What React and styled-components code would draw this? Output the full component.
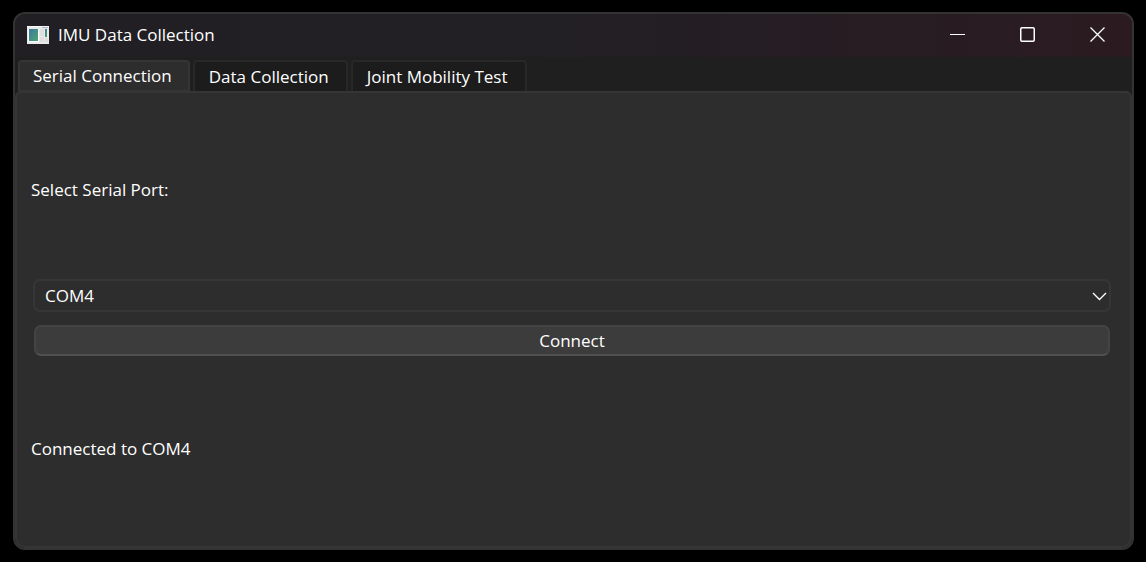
import React, { useState } from "react";
import styled, { createGlobalStyle } from "styled-components";

const GlobalStyle = createGlobalStyle`
  *, *::before, *::after { box-sizing: border-box; }
  body { margin: 0; background: #000; }
  body, button, select {
    font-family: "Segoe UI", "Open Sans", "Noto Sans", sans-serif;
    font-size: 17px;
    line-height: 24px;
    color: #fff;
  }
`;

const Desktop = styled.div`
  display: flex;
  min-height: 100vh;
  padding: 12px 12px 12px 13px;
`;

const Window = styled.main`
  flex: 1;
  display: flex;
  flex-direction: column;
  overflow: hidden;
  border: 2px solid #333;
  border-radius: 12px;
  background: #1f1f1f;
`;

const TitleBar = styled.header`
  display: flex;
  align-items: center;
  height: 43px;
  padding: 0 0 2px 12px;
  background: linear-gradient(90deg, #211f24 0%, #221f25 50%, #2b1b21 100%);
`;

const Title = styled.h1`
  flex: 1;
  margin: 0 0 0 9px;
  font-size: 17px;
  font-weight: 400;
`;

const WindowButton = styled.button`
  display: flex;
  align-items: center;
  justify-content: center;
  width: 70px;
  height: 41px;
  padding: 0;
  border: 0;
  background: transparent;
`;

const TabList = styled.div`
  display: flex;
  align-items: flex-end;
  gap: 3px;
  height: 34px;
  padding-left: 3px;
`;

const Tab = styled.button`
  height: 31px;
  padding: ${(p) => (p.$active ? "0 16px 0 13px" : "1px 17px 0 14px")};
  border: 2px solid ${(p) => (p.$active ? "#353535" : "#282828")};
  border-bottom-width: ${(p) => (p.$active ? "1px" : "0")};
  border-radius: 4px 4px 0 0;
  background: ${(p) => (p.$active ? "#2d2d2d" : "#1c1c1c")};
  white-space: nowrap;
`;

const Panel = styled.section`
  flex: 1;
  display: flex;
  flex-direction: column;
  padding: 8px 19px 4px 14px;
  border: 2px solid #353535;
  border-radius: 6px 6px 10px 10px;
  background: #2d2d2d;
`;

const PortLabel = styled.label`
  flex: 1 1 0;
  display: flex;
  align-items: center;
`;

const Status = styled.output`
  flex: 1 1 8px;
  display: flex;
  align-items: center;
`;

const SelectBox = styled.div`
  display: grid;
  align-items: center;
  margin-left: 2px;

  & > * { grid-area: 1 / 1; }
`;

const PortSelect = styled.select`
  appearance: none;
  width: 100%;
  height: 33px;
  padding: 1px 28px 0 10px;
  border: 2px solid #363636;
  border-radius: 7px;
  background: #2d2d2d;
`;

const Chevron = styled.svg`
  justify-self: end;
  margin: 1px 4px 0 0;
  pointer-events: none;
`;

const ConnectButton = styled.button`
  height: 31px;
  margin: 13px 1px 0 3px;
  padding: 1px 0 0;
  border: 2px solid #444;
  border-bottom-color: #505050;
  border-radius: 7px;
  background: #3c3c3c;
`;

function AppIcon() {
  return (
    <svg width="22" height="18" viewBox="0 0 22 18" aria-hidden="true">
      <defs>
        <linearGradient id="tile" x1="0" y1="0" x2="1" y2="1">
          <stop offset="0" stopColor="#3c78a4" />
          <stop offset="1" stopColor="#4ba66c" />
        </linearGradient>
      </defs>
      <rect width="22" height="18" fill="#e9ebeb" />
      <rect width="22" height="1" fill="#f8f8f8" />
      <rect x="15" y="1" width="6" height="1" fill="#a9b5c2" />
      <rect x="1" y="3" width="11" height="13" fill="#fff" />
      <rect x="2" y="3" width="9" height="12" fill="url(#tile)" />
      <rect x="13" y="3" width="4" height="7" fill="#dededf" />
      <rect x="13" y="11" width="4" height="5" fill="#dededf" />
      <rect x="18" y="3" width="2" height="8" fill="url(#tile)" />
      <rect x="18" y="12" width="3" height="4" fill="#dededf" />
    </svg>
  );
}

const windowGlyphs = {
  Minimize: <path d="M0 7.5H15" />,
  Maximize: <rect x="0.75" y="0.75" width="13.5" height="13.5" rx="1.2" strokeWidth="1.5" />,
  Close: <path d="M0.5 0.5L14.5 14.5M14.5 0.5L0.5 14.5" strokeWidth="1.3" />,
};

const tabs = ["Serial Connection", "Data Collection", "Joint Mobility Test"];

export default function App() {
  const [active, setActive] = useState(tabs[0]);
  return (
    <>
      <GlobalStyle />
      <Desktop>
        <Window>
          <TitleBar>
            <AppIcon />
            <Title>IMU Data Collection</Title>
            {Object.entries(windowGlyphs).map(([name, glyph]) => (
              <WindowButton key={name} type="button" aria-label={name}>
                <svg width="15" height="15" viewBox="0 0 15 15" fill="none" stroke="#fff">
                  {glyph}
                </svg>
              </WindowButton>
            ))}
          </TitleBar>
          <TabList role="tablist">
            {tabs.map((name) => (
              <Tab
                key={name}
                type="button"
                role="tab"
                aria-selected={name === active}
                $active={name === active}
                onClick={() => setActive(name)}
              >
                {name}
              </Tab>
            ))}
          </TabList>
          <Panel role="tabpanel" aria-label={active}>
            <PortLabel htmlFor="port">Select Serial Port:</PortLabel>
            <SelectBox>
              <PortSelect id="port" defaultValue="COM4">
                <option>COM4</option>
              </PortSelect>
              <Chevron width="15" height="9" viewBox="0 0 15 9" fill="none" stroke="#fff" strokeWidth="1.4">
                <path d="M1 1L7.5 7.5L14 1" />
              </Chevron>
            </SelectBox>
            <ConnectButton type="button">Connect</ConnectButton>
            <Status>Connected to COM4</Status>
          </Panel>
        </Window>
      </Desktop>
    </>
  );
}
